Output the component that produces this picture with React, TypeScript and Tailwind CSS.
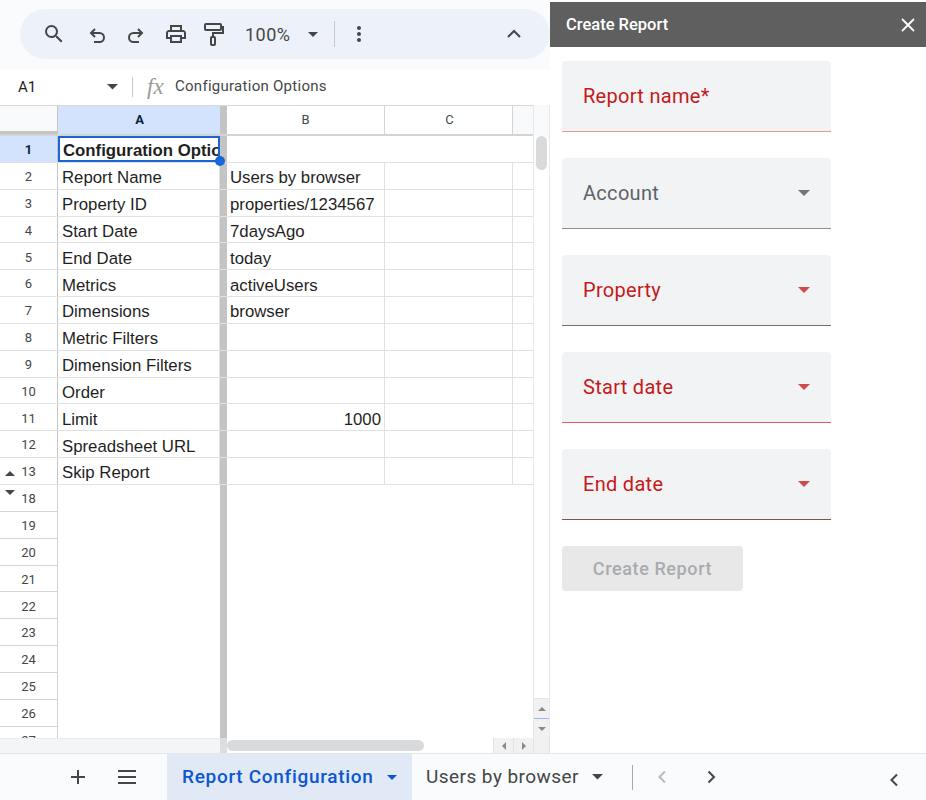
const rows: [number, string, string][] = [
  [2, 'Report Name', 'Users by browser'],
  [3, 'Property ID', 'properties/1234567'],
  [4, 'Start Date', '7daysAgo'],
  [5, 'End Date', 'today'],
  [6, 'Metrics', 'activeUsers'],
  [7, 'Dimensions', 'browser'],
  [8, 'Metric Filters', ''],
  [9, 'Dimension Filters', ''],
  [10, 'Order', ''],
  [11, 'Limit', '1000'],
  [12, 'Spreadsheet URL', ''],
  [13, 'Skip Report', ''],
];

const emptyRows = [18, 19, 20, 21, 22, 23, 24, 25, 26];

const fields = [
  { label: 'Report name*', text: 'text-[#c41a1a]', line: 'border-[#e09a98]', arrow: '' },
  { label: 'Account', text: 'text-[#5f6368]', line: 'border-[#8f8f8f]', arrow: 'fill-[#70757a]' },
  { label: 'Property', text: 'text-[#c41a1a]', line: 'border-[#7a6a6a]', arrow: 'fill-[#d04a47]' },
  { label: 'Start date', text: 'text-[#c41a1a]', line: 'border-[#dd5f5c]', arrow: 'fill-[#d04a47]' },
  { label: 'End date', text: 'text-[#c41a1a]', line: 'border-[#8a5050]', arrow: 'fill-[#d04a47]' },
];

function Caret({ className = 'fill-[#444746]', size = 12 }: { className?: string; size?: number }) {
  return (
    <svg width={size} height={size / 2} viewBox="0 0 12 6" className={`shrink-0 ${className}`}>
      <path d="M0 0h12L6 6z" />
    </svg>
  );
}

function Icon({ d, className = '' }: { d: string; className?: string }) {
  return (
    <svg width="24" height="24" viewBox="0 0 24 24" className={`shrink-0 fill-[#444746] ${className}`}>
      <path d={d} />
    </svg>
  );
}

function Chevron({ dir, className }: { dir: 'left' | 'right' | 'up'; className: string }) {
  const d = dir === 'left' ? 'M15 6.5L9.5 12l5.5 5.5' : dir === 'right' ? 'M9.5 6.5L15 12l-5.5 5.5' : 'M6 15l6-6 6 6';
  return (
    <svg width="24" height="24" viewBox="0 0 24 24" fill="none" strokeWidth="2" className={`shrink-0 ${className}`}>
      <path d={d} />
    </svg>
  );
}

function Toolbar() {
  return (
    <div className="h-[70px] bg-[#f9fbfd] pt-[9px] pl-[20px] shrink-0">
      <div className="h-[50px] w-[530px] bg-[#edf2fa] rounded-[25px] flex items-center pl-[22px] text-[#444746]">
        <Icon d="M15.5 14h-.79l-.28-.27A6.471 6.471 0 0 0 16 9.5 6.5 6.5 0 1 0 9.5 16c1.61 0 3.09-.59 4.23-1.57l.27.28v.79l5 4.99L20.49 19l-4.99-5zm-6 0C7.01 14 5 11.99 5 9.5S7.01 5 9.5 5 14 7.01 14 9.5 11.99 14 9.5 14z" />
        <svg width="24" height="24" viewBox="0 0 24 24" fill="none" stroke="#444746" strokeWidth="2" className="ml-[19px] mt-[2px] shrink-0">
          <path d="M10 6L6 10l4 4M6 10h8.5a4.5 4.5 0 0 1 0 9H9" />
        </svg>
        <svg width="24" height="24" viewBox="0 0 24 24" fill="none" stroke="#444746" strokeWidth="2" className="ml-[15px] mt-[2px] shrink-0">
          <path d="M14 6l4 4-4 4M18 10H9.5a4.5 4.5 0 0 0 0 9H15" />
        </svg>
        <Icon
          className="ml-[16px]"
          d="M19 8h-1V3H6v5H5c-1.66 0-3 1.34-3 3v6h4v4h12v-4h4v-6c0-1.66-1.34-3-3-3zM8 5h8v3H8V5zm8 12v2H8v-4h8v2zm2-2v-2H6v2H4v-4c0-.55.45-1 1-1h14c.55 0 1 .45 1 1v4h-2z"
        />
        <svg width="24" height="24" viewBox="0 0 24 24" fill="none" stroke="#444746" strokeWidth="2" className="ml-[13px] shrink-0">
          <rect x="4" y="2" width="16" height="6" rx="1" />
          <path d="M20 5h2v6H12v4" />
          <rect x="10" y="15" width="4" height="8" rx="1" />
        </svg>
        <span className="ml-[20px] w-[63px] text-[18px] font-['Roboto',sans-serif] tracking-[0.5px]">100%</span>
        <Caret size={10} />
        <div className="ml-[16px] w-px h-[26px] bg-[#c7c7c7]" />
        <Icon className="ml-[12px]" d="M12 8c1.1 0 2-.9 2-2s-.9-2-2-2-2 .9-2 2 .9 2 2 2zm0 2c-1.1 0-2 .9-2 2s.9 2 2 2 2-.9 2-2-.9-2-2-2zm0 6c-1.1 0-2 .9-2 2s.9 2 2 2 2-.9 2-2-.9-2-2-2z" />
        <Chevron dir="up" className="stroke-[#444746] ml-[131px]" />
      </div>
    </div>
  );
}

function FormulaBar() {
  return (
    <div className="h-[35px] flex items-center bg-white shrink-0 pb-[1px] font-['Roboto',sans-serif] text-[#444746]">
      <span className="ml-[18px] w-[89px] text-[15px] text-[#1f1f1f]">A1</span>
      <Caret size={11} />
      <div className="ml-[14px] w-px h-[20px] bg-[#c7c7c7]" />
      <span className="ml-[14px] w-[28px] text-[23px] italic text-[#9a9a9a] font-['Liberation_Serif',serif]">fx</span>
      <span className="text-[15px] tracking-[0.27px] mb-[2px]">Configuration Options</span>
    </div>
  );
}

function Sheet() {
  return (
    <div className="flex-1 flex min-h-0 bg-white font-['Liberation_Sans',sans-serif] text-[16.8px] text-[#1f1f1f]">
      <div className="w-[533px] overflow-hidden">
        {/* column headers */}
        <div className="flex h-[31px] text-[13px] font-['Roboto',sans-serif] text-[#444746] border-t border-[#d9d9d9] border-b-[2px] border-b-[#d4d4d4]">
          <div className="w-[58px] bg-[#f8f9fa] border-r border-b-[3px] border-r-[#c7c7c7] border-b-[#c4c4c4]" />
          <div className="w-[162px] bg-[#d3e3fd] font-bold text-[#0b1f3f] flex items-center justify-center pl-[1px]">A</div>
          <div className="w-[7px] bg-[#c4c4c4]" />
          <div className="w-[158px] flex items-center justify-center border-r border-[#d4d4d4]">B</div>
          <div className="w-[128px] flex items-center justify-center pl-[2px] border-r border-[#d4d4d4]">C</div>
          <div className="flex-1 bg-[#f8f9fa]" />
        </div>

        {/* frozen rows */}
        <div className="flex h-[26.85px] border-b border-[#e1e1e1]">
          <div className="w-[58px] bg-[#d3e3fd] border-r border-[#c7c7c7] flex items-center justify-center pt-[2px] font-['Roboto',sans-serif] text-[13px] font-bold text-[#0b1f3f]">1</div>
          <div className="w-[162px] relative border-2 border-[#1a66d6] font-bold flex items-center pl-[3px] pt-[3px] whitespace-nowrap">
            <span className="overflow-hidden w-full">Configuration Options</span>
            <div className="absolute -right-[7px] -bottom-[6px] w-[10px] h-[10px] rounded-full bg-[#1a66d6]" />
          </div>
          <div className="w-[7px] bg-[#c4c4c4]" />
          <div className="flex-1" />
        </div>
        {rows.map(([n, label, value]) => (
          <div key={n} className="flex h-[26.85px] border-b border-[#e1e1e1]">
            <div className="w-[58px] relative bg-white border-r border-[#c7c7c7] flex items-center justify-center pt-[2px] font-['Roboto',sans-serif] text-[13px] text-[#444746]">
              {n === 13 && (
                <svg width="10" height="5" viewBox="0 0 10 5" className="absolute left-[5px] top-[13px] fill-[#444746]">
                  <path d="M0 5h10L5 0z" />
                </svg>
              )}
              {n}
            </div>
            <div className="w-[162px] flex items-center pl-[4px] pt-[4px] border-r border-[#e1e1e1] whitespace-nowrap">{label}</div>
            <div className="w-[7px] bg-[#c4c4c4]" />
            <div className={`w-[158px] flex items-center px-[3px] pt-[4px] border-r border-[#e1e1e1] whitespace-nowrap ${value === '1000' ? 'justify-end' : ''}`}>{value}</div>
            <div className="w-[128px] border-r border-[#e1e1e1]" />
          </div>
        ))}

        {/* rows below the hidden group */}
        {emptyRows.map((n) => (
          <div key={n} className="flex h-[26.85px]">
            <div className="w-[58px] relative bg-white border-r border-b border-[#d4d4d4] flex items-center justify-center pt-[2px] font-['Roboto',sans-serif] text-[13px] text-[#444746]">
              {n === 18 && (
                <svg width="10" height="5" viewBox="0 0 10 5" className="absolute left-[5px] top-[5px] fill-[#444746]">
                  <path d="M0 0h10L5 5z" />
                </svg>
              )}
              {n}
            </div>
            <div className="w-[162px]" />
            <div className="w-[7px] bg-[#c4c4c4]" />
          </div>
        ))}
        <div className="flex h-[27px]">
          <div className="w-[58px] bg-white border-r border-[#d4d4d4] flex items-start justify-center pt-[4px] font-['Roboto',sans-serif] text-[13px] text-[#444746]">27</div>
          <div className="w-[162px]" />
          <div className="w-[7px] bg-[#c4c4c4]" />
        </div>
      </div>

      {/* vertical scrollbar */}
      <div className="w-[17px] shrink-0 border-l border-r border-[#e8e8e8] flex flex-col">
        <div className="h-[31px] bg-[#f8f9fa]" />
        <div className="flex-1 px-[2px]">
          <div className="w-[11px] h-[34px] rounded-full bg-[#d9dadc]" />
        </div>
        <div className="h-[20px] bg-[#f1f1f1] border-t border-[#e4e4e4] flex items-center justify-center">
          <svg width="8" height="4" viewBox="0 0 8 4" className="fill-[#8a8a8a]"><path d="M0 4h8L4 0z" /></svg>
        </div>
        <div className="h-[20px] bg-[#f1f1f1] border-t border-[#9db8e8] flex items-center justify-center">
          <svg width="8" height="4" viewBox="0 0 8 4" className="fill-[#8a8a8a]"><path d="M0 0h8L4 4z" /></svg>
        </div>
      </div>
    </div>
  );
}

function HorizontalScroll() {
  return (
    <div className="h-[15px] flex bg-white shrink-0">
      <div className="w-[220px] bg-[#f4f5f7] border-t border-[#ececec]" />
      <div className="w-[7px] bg-[#dcdee2]" />
      <div className="flex-1 flex items-center">
        <div className="w-[197px] h-[11px] rounded-full bg-[#d9dadc]" />
      </div>
      <div className="w-[20px] bg-[#f1f1f1] border-l border-[#e4e4e4] flex items-center justify-center">
        <svg width="4" height="8" viewBox="0 0 4 8" className="fill-[#8a8a8a]"><path d="M4 0v8L0 4z" /></svg>
      </div>
      <div className="w-[20px] bg-[#f1f1f1] border-l border-[#e4e4e4] flex items-center justify-center">
        <svg width="4" height="8" viewBox="0 0 4 8" className="fill-[#8a8a8a]"><path d="M0 0v8l4-4z" /></svg>
      </div>
      <div className="w-[17px] bg-[#f1f1f1] border-l border-r border-[#e4e4e4]" />
    </div>
  );
}

function ReportPanel() {
  return (
    <div className="w-[376px] shrink-0 bg-white font-['Roboto',sans-serif]">
      <div className="mt-[2px] h-[45px] bg-[#5f5f5f] flex items-center justify-between pl-[16px] pr-[9px] text-white">
        <span className="text-[16.5px] font-medium pt-[2px]">Create Report</span>
        <svg width="18" height="18" viewBox="0 0 18 18" stroke="white" strokeWidth="1.8">
          <path d="M3 3l12 12M15 3L3 15" />
        </svg>
      </div>
      <div className="pt-[14px] pl-[12px] flex flex-col gap-[26px]">
        {fields.map((f) => (
          <div
            key={f.label}
            className={`w-[269px] h-[71px] bg-[#f1f3f5] rounded-t-[4px] border-b ${f.line} flex items-center justify-between px-[21px]`}
          >
            <span className={`text-[20px] tracking-[0.3px] ${f.text}`}>{f.label}</span>
            {f.arrow && <Caret className={f.arrow} />}
          </div>
        ))}
        <div className="w-[181px] h-[45px] bg-[#e8e8e8] rounded-[4px] flex items-center justify-center text-[18px] font-medium tracking-[0.6px] text-[#a8abaf]">
          Create Report
        </div>
      </div>
    </div>
  );
}

function BottomBar() {
  return (
    <div className="h-[47px] shrink-0 bg-[#f9fbfd] border-t border-[#e4e6e9] flex items-center font-['Roboto',sans-serif] text-[#444746]">
      <svg width="24" height="24" viewBox="0 0 24 24" stroke="#444746" strokeWidth="2" className="ml-[66px] shrink-0">
        <path d="M12 5v14M5 12h14" />
      </svg>
      <svg width="24" height="24" viewBox="0 0 24 24" stroke="#444746" strokeWidth="2" className="ml-[25px] shrink-0">
        <path d="M3 6h18M3 12h18M3 18h18" />
      </svg>
      <div className="ml-[28px] w-[245px] h-full bg-[#e1e9f7] flex items-center pl-[15px] text-[#0b57d0] font-medium text-[19px] tracking-[0.7px]">
        <span className="w-[205px] whitespace-nowrap">Report Configuration</span>
        <Caret size={10} className="fill-[#0b57d0]" />
      </div>
      <div className="ml-[14px] w-[206px] flex items-center text-[19px] tracking-[0.45px]">
        <span className="w-[166px] whitespace-nowrap">Users by browser</span>
        <Caret size={11} />
      </div>
      <div className="w-px h-[25px] bg-[#a8a8a8]" />
      <Chevron dir="left" className="stroke-[#b8bcc0] ml-[17px]" />
      <Chevron dir="right" className="stroke-[#444746] ml-[25px]" />
      <Chevron dir="left" className="stroke-[#444746] ml-[159px] mt-[6px]" />
    </div>
  );
}

export default function App() {
  return (
    <div className="w-[926px] h-[800px] overflow-hidden bg-white flex flex-col">
      <div className="flex flex-1 min-h-0">
        <div className="w-[550px] shrink-0 flex flex-col">
          <Toolbar />
          <FormulaBar />
          <Sheet />
          <HorizontalScroll />
        </div>
        <ReportPanel />
      </div>
      <BottomBar />
    </div>
  );
}
